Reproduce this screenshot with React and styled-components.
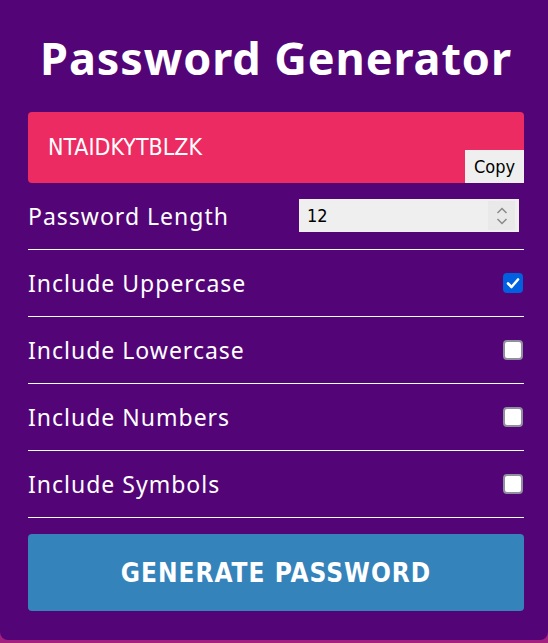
import React, { useState } from "react";
import styled, { createGlobalStyle } from "styled-components";

const Global = createGlobalStyle`
  html, body { margin: 0; padding: 0; }
  body {
    background: #a3207f;
    width: 548px;
    height: 643px;
    overflow: hidden;
    font-family: "Noto Sans", sans-serif;
  }
`;

const Card = styled.main`
  box-sizing: border-box;
  width: 548px;
  height: 640px;
  background: #530577;
  border-radius: 0 0 8px 8px;
  padding: 32px 24px 0 28px;
  display: flex;
  flex-direction: column;
  color: #fff;
`;

const Title = styled.h1`
  margin: 0 0 28px 0;
  text-align: center;
  font-family: "Noto Sans", sans-serif;
  font-weight: 700;
  font-size: 45px;
  line-height: 52px;
  letter-spacing: 0.9px;
`;

const Result = styled.div`
  position: relative;
  height: 71px;
  background: #ec2b62;
  border-radius: 4px;
  display: flex;
  align-items: center;
  padding: 0 20px;
  margin-bottom: 16px;
`;

const ResultText = styled.span`
  font-family: "DejaVu Sans Condensed", sans-serif;
  font-size: 23px;
  color: #fff;
  margin-top: -2px;
`;

const CopyButton = styled.button`
  position: absolute;
  right: 0;
  bottom: 0;
  height: 33px;
  width: 59px;
  border: none;
  border-radius: 0;
  background: #efefef;
  color: #000;
  font-family: "DejaVu Sans Condensed", sans-serif;
  font-size: 18px;
  padding: 0;
`;

const Row = styled.label`
  display: flex;
  align-items: center;
  justify-content: space-between;
  height: ${(p) => (p.$first ? "50px" : "66px")};
  border-bottom: 1px solid #fff;
`;

const Label = styled.span`
  font-family: "Noto Sans", sans-serif;
  font-size: 23px;
  letter-spacing: 1px;
  color: #fff;
  margin-top: ${(p) => (p.$first ? "-16px" : "0")};
`;

const NumberBox = styled.div`
  display: flex;
  align-items: center;
  width: 220px;
  height: 33px;
  background: #efefef;
  margin-right: 5px;
  margin-top: -17px;
`;

const NumberInput = styled.input`
  flex: 1;
  min-width: 0;
  border: none;
  background: transparent;
  font-family: "DejaVu Sans Condensed", sans-serif;
  font-size: 18px;
  color: #000;
  padding: 0 0 0 8px;
  outline: none;
  appearance: textfield;
  -moz-appearance: textfield;
  &::-webkit-inner-spin-button,
  &::-webkit-outer-spin-button {
    -webkit-appearance: none;
    margin: 0;
  }
`;

const Spinner = styled.span`
  width: 27px;
  height: 29px;
  margin-right: 4px;
  background: #e9e9e9;
  display: flex;
  align-items: center;
  justify-content: center;
`;

const Check = styled.span`
  box-sizing: border-box;
  width: 20px;
  height: 20px;
  border-radius: 4px;
  border: 2px solid ${(p) => (p.$on ? "#0060df" : "#8f8f9d")};
  background: ${(p) => (p.$on ? "#0060df" : "#fff")};
  display: flex;
  align-items: center;
  justify-content: center;
  margin-right: 1px;
`;

const Hidden = styled.input`
  position: absolute;
  opacity: 0;
  width: 0;
  height: 0;
`;

const Generate = styled.button`
  margin-top: 16px;
  height: 77px;
  border: none;
  border-radius: 4px;
  background: #3583bb;
  color: #fff;
  font-family: "DejaVu Sans Condensed", sans-serif;
  font-weight: 700;
  font-size: 26px;
  letter-spacing: 1px;
  cursor: pointer;
`;

function CheckRow({ label, checked, onChange }) {
  return (
    <Row>
      <Label>{label}</Label>
      <Hidden type="checkbox" checked={checked} onChange={onChange} />
      <Check $on={checked}>
        {checked && (
          <svg width="14" height="12" viewBox="0 0 14 12">
            <path d="M2 6.5 L5.5 10 L12 2.5" fill="none" stroke="#fff" strokeWidth="2.6" strokeLinecap="round" strokeLinejoin="round" />
          </svg>
        )}
      </Check>
    </Row>
  );
}

export default function App() {
  const [opts, setOpts] = useState({ upper: true, lower: false, num: false, sym: false });
  const [len, setLen] = useState(12);
  const toggle = (k) => () => setOpts((o) => ({ ...o, [k]: !o[k] }));
  return (
    <>
      <Global />
      <Card>
        <Title>Password Generator</Title>
        <Result>
          <ResultText>NTAIDKYTBLZK</ResultText>
          <CopyButton>Copy</CopyButton>
        </Result>
        <Row $first>
          <Label $first>Password Length</Label>
          <NumberBox>
            <NumberInput type="number" value={len} onChange={(e) => setLen(e.target.value)} />
            <Spinner>
              <svg width="14" height="22" viewBox="0 0 14 22">
                <path d="M2.5 8 L7 3.5 L11.5 8" fill="none" stroke="#8a8a8a" strokeWidth="1.5" />
                <path d="M2.5 14 L7 18.5 L11.5 14" fill="none" stroke="#8a8a8a" strokeWidth="1.5" />
              </svg>
            </Spinner>
          </NumberBox>
        </Row>
        <CheckRow label="Include Uppercase" checked={opts.upper} onChange={toggle("upper")} />
        <CheckRow label="Include Lowercase" checked={opts.lower} onChange={toggle("lower")} />
        <CheckRow label="Include Numbers" checked={opts.num} onChange={toggle("num")} />
        <CheckRow label="Include Symbols" checked={opts.sym} onChange={toggle("sym")} />
        <Generate>GENERATE PASSWORD</Generate>
      </Card>
    </>
  );
}
